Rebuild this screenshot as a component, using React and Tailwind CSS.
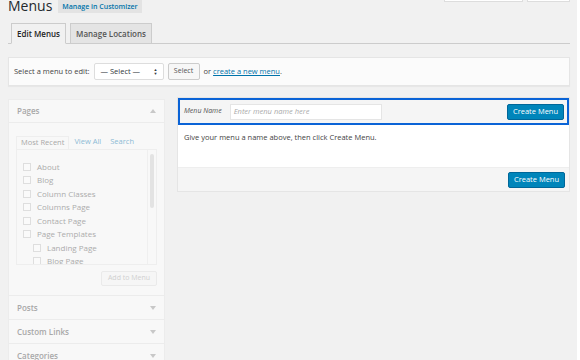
const pages = [
  { label: "About", sub: false },
  { label: "Blog", sub: false },
  { label: "Column Classes", sub: false },
  { label: "Columns Page", sub: false },
  { label: "Contact Page", sub: false },
  { label: "Page Templates", sub: false },
  { label: "Landing Page", sub: true },
  { label: "Blog Page", sub: true },
];

function Arrow({ up }) {
  return (
    <svg width="6" height="4" viewBox="0 0 6 4" className="text-[#c8c8c8]">
      <path d={up ? "M0 4 L3 0 L6 4 Z" : "M0 0 L3 4 L6 0 Z"} fill="currentColor" />
    </svg>
  );
}

function Section({ title }) {
  return (
    <div className="flex h-[24px] items-center justify-between border-t border-[#ececec] px-[8px]">
      <span className="text-[8px] font-semibold text-[#a8a8a8]">{title}</span>
      <Arrow />
    </div>
  );
}

export default function App() {
  return (
    <div className="flex h-[360px] w-[580px] overflow-hidden bg-[#f1f1f1] font-['Open_Sans',sans-serif] text-[#444]">
      <div className="w-[577px] shrink-0 pl-[8px] pr-[7px]">
        {/* heading row */}
        <div className="relative flex h-[23px] items-start">
          <h1 className="-mt-[3px] text-[14px] leading-[17px] text-[#23282d]">Menus</h1>
          <span className="ml-[6px] flex h-[13px] items-center bg-[#e3e3e3] px-[4px] text-[7px] font-semibold leading-none text-[#0073aa]">
            Manage in Customizer
          </span>
          <div className="absolute right-[47px] top-0 h-[2px] w-[79px] border border-t-0 border-[#ddd] bg-white" />
          <div className="absolute right-0 top-0 h-[2px] w-[43px] border border-t-0 border-[#ddd] bg-white" />
        </div>

        {/* tabs */}
        <div className="flex h-[21px] items-end gap-[4px] border-b border-[#ccc] pl-[3px]">
          <div className="-mb-px flex h-[21px] w-[55px] items-center justify-center border border-b-[#f1f1f1] border-[#ccc] bg-[#f1f1f1] text-[8px] font-semibold text-[#222]">
            Edit Menus
          </div>
          <div className="flex h-[20px] w-[82px] items-center justify-center border border-b-0 border-[#ccc] bg-[#e4e4e4] text-[8px] font-semibold text-[#555]">
            Manage Locations
          </div>
        </div>

        {/* select bar */}
        <div className="mt-[13px] flex h-[29px] items-center border border-[#e5e5e5] bg-[#fbfbfb] pl-[5px] text-[7.5px] shadow-[0_1px_1px_rgba(0,0,0,0.04)]">
          <span>Select a menu to edit:</span>
          <div className="ml-[4px] flex h-[17px] w-[70px] items-center justify-between rounded-[2px] border border-[#ddd] bg-white pl-[6px] pr-[5px] text-[7.5px] text-[#32373c]">
            <span>— Select —</span>
            <span className="flex flex-col text-[4px] leading-[4px]">
              <span>▲</span>
              <span>▼</span>
            </span>
          </div>
          <div className="ml-[4px] flex h-[17px] w-[32px] items-center justify-center rounded-[2px] border border-[#ccc] bg-[#f7f7f7] text-[7px] text-[#555]">
            Select
          </div>
          <span className="ml-[4px]">
            or <span className="text-[#0073aa] underline">create a new menu</span>.
          </span>
        </div>

        {/* columns */}
        <div className="flex gap-[11px]">
          <div className="mt-[13px] w-[157px] shrink-0">
            <div className="border border-[#ececec] bg-[#f8f8f8]">
              <div className="flex h-[23px] items-center justify-between border-b border-[#ececec] px-[8px]">
                <span className="text-[8px] font-semibold text-[#a8a8a8]">Pages</span>
                <Arrow up />
              </div>
              <div className="px-[7px] pb-[9px] pt-[13px]">
                <div className="flex h-[13px] items-end text-[7.5px]">
                  <div className="flex h-[13px] items-center border border-b-0 border-[#eee] px-[4px] text-[#a8a8a8]">Most Recent</div>
                  <span className="ml-[5px] pb-[2px] text-[#8dbbd5]">View All</span>
                  <span className="ml-[9px] pb-[2px] text-[#8dbbd5]">Search</span>
                </div>
                <div className="relative h-[116px] overflow-hidden border border-[#eee] bg-[#f8f8f8] pl-[6px] pt-[10px]">
                  <div className="absolute right-[2px] top-[4px] h-[54px] w-[4px] rounded-[2px] bg-[#e3e3e3]" />
                  <div className="absolute bottom-0 right-[8px] top-0 w-px bg-[#efefef]" />
                  {pages.map((p) => (
                    <div key={p.label} className={`flex h-[13.5px] items-center ${p.sub ? "pl-[10px]" : ""}`}>
                      <span className="h-[8px] w-[8px] border border-[#dedede] bg-[#fafafa]" />
                      <span className="ml-[6px] text-[8px] text-[#acacac]">{p.label}</span>
                    </div>
                  ))}
                </div>
                <div className="mt-[6px] flex justify-end">
                  <div className="flex h-[15px] w-[56px] items-center justify-center rounded-[2px] border border-[#eaeaea] bg-[#f6f6f6] text-[7px] text-[#d0d0d0]">
                    Add to Menu
                  </div>
                </div>
              </div>
              <Section title="Posts" />
              <Section title="Custom Links" />
              <Section title="Categories" />
            </div>
          </div>

          <div className="mt-[11px] flex-1">
            <div className="ml-[1px] border border-[#e5e5e5] bg-white">
              <div className="flex h-[27px] items-center justify-between border-2 border-[#0a63d6] bg-[#f5f5f5] pl-[4px] pr-[3px]">
                <div className="flex items-center">
                  <span className="text-[7px] italic text-[#555]">Menu Name</span>
                  <div className="ml-[8px] flex h-[16px] w-[152px] items-center border border-[#e5e5e5] bg-white pl-[3px] text-[7.5px] italic text-[#aaa]">
                    Enter menu name here
                  </div>
                </div>
                <div className="flex h-[16px] w-[57px] items-center justify-center rounded-[2px] border border-[#006799] bg-[#0085ba] text-[7.5px] text-white">
                  Create Menu
                </div>
              </div>
              <div className="h-[42px] pl-[6px] pt-[7px] text-[7.5px] text-[#444]">
                Give your menu a name above, then click Create Menu.
              </div>
              <div className="flex h-[24px] items-center justify-end border-t border-[#eee] bg-[#f5f5f5] pr-[4px]">
                <div className="flex h-[16px] w-[57px] items-center justify-center rounded-[2px] border border-[#006799] bg-[#0085ba] text-[7.5px] text-white">
                  Create Menu
                </div>
              </div>
            </div>
          </div>
        </div>
      </div>
      <div className="w-[3px] bg-white" />
    </div>
  );
}
